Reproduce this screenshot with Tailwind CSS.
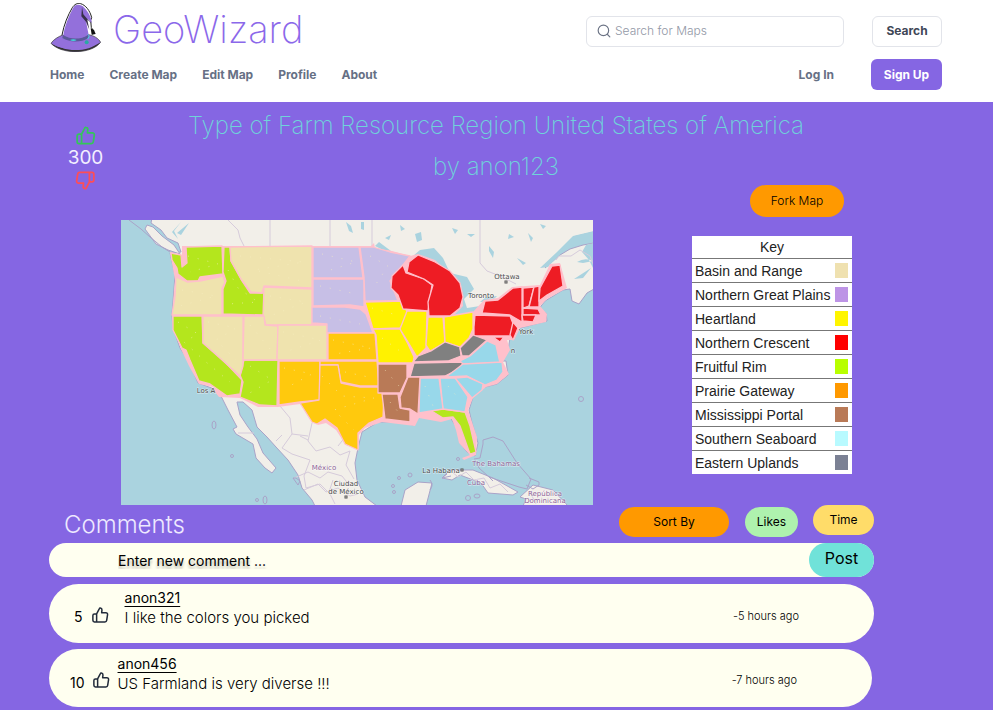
<!DOCTYPE html>
<html lang="en">
<head>
<meta charset="utf-8">
<meta name="viewport" content="width=device-width, initial-scale=1">
<title>GeoWizard</title>
<script src="https://cdn.jsdelivr.net/npm/@tailwindcss/browser@4"></script>
</head>
<body class="min-h-screen bg-[#8566e3] font-['Inter','Liberation_Sans',sans-serif] text-black">

<svg class="hidden" aria-hidden="true">
  <symbol id="thumb" viewBox="0 0 24 24">
    <path d="M7.500 10.500 11 3.800c.3-.9.9-1.300 1.700-1.100 1.400.3 2 1.300 1.900 2.700L14.200 9h5.600c1.600 0 2.500 1 2.300 2.500l-1.200 7.700c-.2 1.300-1.100 2-2.300 2H4.600c-1.300 0-2.100-.8-2.100-2.100v-6.500c0-1.300.8-2.100 2.100-2.100zM7.500 10.500v10.700" fill="none" stroke="currentColor" stroke-width="2" stroke-linejoin="round"/>
  </symbol>
</svg>

<header class="bg-white pt-[3px] pr-[51px] pb-3 pl-[50px]">
  <div class="flex h-14 items-center">
    <a href="#" class="flex items-center gap-3">
      <svg class="mb-2 h-[49px] w-[51px]" viewBox="150 8 153 147" aria-hidden="true">
        <path d="M186 104C192 72 204 44 217 22c7-11 15-14 25-12 14 4 28 20 33 42l-3 8 2 22 6 8-2 12" fill="none" stroke="#222" stroke-width="3"/>
        <path d="M153 129c8-12 22-20 35-25 26 14 56 13 76-1 18 2 32 12 38 23-16 19-44 28-76 28-30 0-58-9-73-25z" fill="#9370db" stroke="#333" stroke-width="2"/>
        <path d="M190 106c2-22 16-60 31-86 6-9 22-9 32 2 11 11 22 30 22 46l-12-12-5 6 8 42c-20 16-54 16-76 2z" fill="#9370db"/>
        <path d="M153 129c30 22 100 26 149-3-16 19-44 28-76 28-30 0-58-9-73-25z" fill="#333"/>
        <path d="M157 128c34 14 96 18 142-4-18 18-44 25-73 25-28 0-52-8-69-21z" fill="#9370db"/>
        <path d="M246 20l4 22 12 14 14 14-14-12 6 30-10-24-14-16z" fill="#37304a"/>
        <path d="M189 104c24 15 54 14 76-1l2 9c-26 16-58 14-80 1z" fill="#5b5a9a"/>
        <path d="M210 119c6-3 14-3 20 0-6 4-14 4-20 0z" fill="#46d4dd"/>
        <path d="M272 84l10 5 5 12-12 2z" fill="#111"/>
        <path d="M263 102l5 5-5 9" fill="none" stroke="#46d4dd" stroke-width="3"/>
        <circle cx="260" cy="126" r="6" fill="#2aa9a4"/>
      </svg>
      <span class="mb-1 text-[38px] leading-[48px] font-extralight text-[#8b68ea]">GeoWizard</span>
    </a>
    <form class="ml-auto flex items-center gap-7">
      <label class="flex h-[31px] w-[258px] items-center gap-1 rounded-md border border-[#e2e4ea] px-[10px]">
        <svg class="h-[14px] w-[14px] shrink-0 text-[#6b7385]" viewBox="0 0 24 24" fill="none" stroke="currentColor" stroke-width="2" stroke-linecap="round" aria-hidden="true"><circle cx="11" cy="11" r="9"/><path d="m18 18 4 4"/></svg>
        <input type="search" aria-label="Search for Maps" placeholder="Search for Maps" class="w-full min-w-0 text-[12px] font-light outline-none placeholder:text-[#9298a6]">
      </label>
      <button type="button" class="h-[31px] w-[70px] rounded-md border border-[#e2e4ea] text-[12px] font-bold text-[#3f4757]">Search</button>
    </form>
  </div>
  <nav class="flex h-[31px] items-center gap-[25px] text-[12px] font-bold text-[#667085]">
    <a href="#">Home</a>
    <a href="#">Create Map</a>
    <a href="#">Edit Map</a>
    <a href="#">Profile</a>
    <a href="#">About</a>
    <a href="#" class="ml-auto">Log In</a>
    <button type="button" class="ml-3 h-[31px] w-[71px] rounded-md bg-[#8566e3] text-[12px] font-bold text-white">Sign Up</button>
  </nav>
</header>

<main class="pr-[51px] pl-[50px]">
  <div class="grid grid-cols-[71px_1fr_99px_250px]">
    <section class="col-start-1 row-start-1 flex flex-col items-center pt-[23px]" aria-label="Map rating">
      <button type="button" aria-label="Like map" class="text-[#34c65a]"><svg class="h-[21px] w-[21px]"><use href="#thumb"/></svg></button>
      <span class="text-[19px] leading-6 text-[#f3efff]">300</span>
      <button type="button" aria-label="Dislike map" class="text-[#ff4d55]"><svg class="h-[21px] w-[21px] rotate-180"><use href="#thumb"/></svg></button>
    </section>
    <h1 class="pointer-events-none col-span-4 col-start-1 row-start-1 pt-[3px] text-center text-[24px] leading-[41px] font-extralight text-[#6fd3da]">Type of Farm Resource Region United States of America<br>by anon123</h1>
    <div class="col-start-4 row-start-1 flex h-[118px] w-40 items-end justify-end pr-2 pb-[3px]">
      <button type="button" class="h-8 w-[94px] rounded-full bg-[#ff9900] text-[12px] font-light">Fork Map</button>
    </div>

    <svg class="col-start-2 row-start-2 block w-full" viewBox="121 220 472 285" role="img" aria-label="Map of United States farm resource regions">
      <rect x="121" y="220" width="472" height="285" fill="#aad3df"/>
      <g fill="#f2efe9" stroke="#a9a3c8" stroke-width="1" stroke-linejoin="round">
        <path d="M152 218 151 223 161 230 167 238 178 243 181 252 170 253 175 275 172 315 173 328 180 348 188 360 198 383 217 390 222 398 228 410 237 427 233 429 236 434 253 444 256 458 265 468 272 473 276 468 263 453 257 439 248 427 240 415 237 402 243 402 252 410 257 427 267 437 276 447 288 460 298 475 302 488 312 500 315 506H377L365 497 357 480 355 463 358 448 362 432 378 422 398 422 413 425 418 417 435 416 441 421 450 417 458 430 460 443 467 452 475 456 478 443 472 423 469 410 473 397 485 387 497 384 508 375 506 361 502 361 508 351 510 338 520 328 547 321 546 313 538 310 545 301 563 290 570 289 572 301 579 304 587 293 594 289V243L583 245 570 249 560 255 545 268 558 254 573 237 594 232V218Z"/>
        <path d="M147 225 145 229 156 244 168 250 180 254 174 245 162 236 153 227Z"/>
        <path d="M442 478 450 470 473 470 493 478 518 492 513 495 488 493 481 483 460 475 452 480Z"/>
        <path d="M520 497 533 485 553 490 568 506H523L526 499Z"/>
        <path d="M401 506 405 490 418 482 432 483 426 506Z"/>
      </g>
      <g fill="#aad3df">
        <path d="M413 256 420 250 434 248 443 258 450 273 467 277 474 289 464 299 467 308 480 306 474 313 452 318 440 290Z"/>
        <path d="M480 302 486 297 497 296 492 301Z"/>
        <path d="M594 231 573 236 557 252 540 268 548 267 563 251 580 242 594 242Z"/>
        <path d="M586 245 582 252 589 260 594 270V243ZM577 262q8-5 16-1l-10 2zM574 279l17-11-8 10z"/>
        <path d="M346 222l5 4 2 7-4-2zM361 222l3 0 0 8-3-1zM415 234l6-2 1 8-5 2zM181 222l-7 9 4 8-6-7zM177 233l12-10-8 12zM385 238l6-3-2 5zM375 246l8 4 8 1-12-9zM400 225l5 4-4 2zM452 228l3 6 3-4zM467 234l4 3 4-3zM489 246l5 6-1 6-4-7zM528 233l5 5-2 4zM540 224l3 5 3-3zM509 234l5 3-6 2zM517 258l9 5-3 2z"/>
      </g>
      <g fill="none" stroke="#d6cbdb" stroke-width="1">
        <path d="M228 220l10 10 2 8 4 8M270 220v26M330 220v26M372 220v27M480 220V263l7 8 13 5 16 8M556 260l3-4 12 0 9-6 10 6 3 8"/>
        <path d="M276 441l6-6M280 406l10 12 2 16-10 14 10 6 18 6-6 16 2 12 14-4 10 10M312 423l-4 18 8 10 14-4 10 8 10-4-4 14 8 14M338 446l8-10-6-10M294 478l14-6 12 6 8-6 14 4 8 10M304 490l14-6 8 8 12-4 12 8 8-2M333 480l-4 12 6 12M450 470l8 7 8-5 8 8 10-2 6 10 10-4 8 8M238 433h16M530 492l6 12M300 436l8 4M292 434l16 2"/>
      </g>
      <g fill="none" stroke="#a9a3c8" stroke-width="1">
        <path d="M129 220l12 9 9 8 12 10 8 5"/>
        <path d="M474 459l6-1 3-14 0-4 10-3 10 4 14 22 14 16-4 10-8-2-30-10-10-9-4-8M529 478l10 4 0 3-6 4-7-4M493 481l-5-5M447 474l-5 4 9-2"/>
        <ellipse cx="214" cy="425" rx="2" ry="4"/><circle cx="232" cy="456" r="1.500"/><circle cx="257" cy="500" r="1.500"/><ellipse cx="265" cy="500" rx="2" ry="4"/><circle cx="581" cy="399" r="2.500"/><circle cx="410" cy="475" r="2"/><circle cx="399" cy="478" r="1.500"/><circle cx="393" cy="486" r="1.500"/><circle cx="394" cy="492" r="1.500"/><circle cx="468" cy="498" r="2.500"/><ellipse cx="477" cy="496" rx="3" ry="2"/><path d="M430 480q4 5 0 10M293 478l5 7 2-4-4-3z"/><circle cx="458" cy="459" r="1.500"/>
      </g>
      <path fill="#ffc0cb" d="M170 252 182 255 182 246H371L374 243 375 248 392 251 410 256 418 254 435 260 461 285 463 306 452 317 473 312 484 300 498 298 512 287 540 285 550 264 560 263 567 288 547 299 540 306 547 314 546 322 520 328 514 340 507 340 510 350 503 362 509 374 497 384 486 387 473 398 468 410 477 437 476 455 464 460 462 458 470 455 459 443 456 430 452 419 441 422 419 418 415 426 382 422 365 428 359 435 359 449 346 445 336 430 326 423 318 425 300 404 278 407 258 407 240 398 219 397 215 392 213 387 199 384 189 366 181 349 173 329 172 315 175 280Z"/>
      <g stroke="#ffc0cb" stroke-width="1.300" stroke-linejoin="round">
        <g fill="#b4e61d">
          <path d="M186 247 222 246 223 274 200 277 198 281 187 281 178 274 177 268 172 260 171 253 181 255 182 267 187 263Z"/>
          <path d="M224 247H230L231 261 242 281 250 293 264 293V315L223 314V289L226 281 223 272Z"/>
          <path d="M173 316H202L203 343 223 360 242 380 240 394 227 396 210 384 199 381 190 360 186 350 182 348 173 330Z"/>
          <path d="M244 360H278L277 406 260 405 240 397 243 382 240 375Z"/>
          <path d="M430 410 443 409 465 412 470 426 476 452 470 454 460 426 453 417 443 418Z"/>
        </g>
        <g fill="#efe3ae">
          <path d="M230 247 312 246V288L264 286 262 293 251 292 241 279 231 261Z"/>
          <path d="M264 287 312 289V325H266L263 315Z"/>
          <path d="M176 277 187 282 200 281 223 276 225 282 222 288V315H172L175 297Z"/>
          <path d="M203 316H243V366L240 376 203 343Z"/>
          <path d="M244 316H264L265 325 278 326 277 360H243Z"/>
          <path d="M278 325H327V360H277Z"/>
        </g>
        <g fill="#c7bfe6">
          <path d="M313 247H359L363 278H313Z"/>
          <path d="M313 279H364V307L350 305 313 306Z"/>
          <path d="M312 307 345 307 360 309 366 314 373 333H327V324L312 323Z"/>
          <path d="M360 247 373 247 390 252 410 256 403 265 390 281 398 301H365L364 277Z"/>
        </g>
        <g fill="#ffc90d">
          <path d="M279 361H320V400L300 402 279 405Z"/>
          <path d="M328 333 375 333 377 360H328Z"/>
          <path d="M320 361H377L379 386 360 386 341 382 338 365H320Z"/>
          <path d="M320 365H338L341 383 360 387 378 387 384 395 383 417 369 423 358 433 358 450 345 444 337 428 325 419 317 424 312 422 300 403 319 400Z"/>
        </g>
        <g fill="#fff200">
          <path d="M365 302 403 301 408 315 400 328 373 329Z"/>
          <path d="M373 329 400 329 408 344 414 357 413 363H378L376 335Z"/>
          <path d="M407 311H427L426 348 417 357 408 342 400 329Z"/>
          <path d="M428 317H443L445 343 430 351 426 345Z"/>
          <path d="M444 317 473 312V329L469 338 460 347 445 342Z"/>
        </g>
        <g fill="#ee1c24">
          <path d="M403 265 406 273 424 279 432 285 428 311 403 309 398 295 391 288 392 276Z"/>
          <path d="M418 255 435 262 450 271 460 283 463 297 460 308 450 316 429 316 428 302 433 285 424 279 407 272 409 262Z"/>
          <path d="M485 301 498 300 513 288 522 287 522 322 510 315 482 313Z"/>
          <path d="M475 315 510 316 514 326 511 336H474V327Z"/>
          <path d="M513 322 518 328 513 340 510 335Z"/>
          <path d="M523 288 534 287 529 306 523 308Z"/>
          <path d="M534 287 539 286V307H529Z"/>
          <path d="M523 308 538 309 541 315H523Z"/>
          <path d="M522 315H536L533 322 523 321Z"/>
          <path d="M552 266 560 265 563 286 547 295 539 301 540 288Z"/>
          <path d="M493 337H504L500 342Z"/>
        </g>
        <g fill="#808080">
          <path d="M413 362 418 356 431 351 445 342 460 347 461 356 448 361Z"/>
          <path d="M460 348 473 335 487 340 469 356 462 356Z"/>
          <path d="M414 363 463 362 461 368 445 376 410 377Z"/>
        </g>
        <g fill="#98d8ea">
          <path d="M460 361 470 356 487 341 496 345 500 363 463 364Z"/>
          <path d="M463 364 502 362 503 372 497 380 485 385 467 376 446 377Z"/>
          <path d="M455 378 467 377 483 384 482 390 472 398Z"/>
          <path d="M440 378 455 378 468 397 465 412 443 409Z"/>
          <path d="M420 378 439 378 443 409 419 413Z"/>
        </g>
        <g fill="#b97a57">
          <path d="M378 364 407 364 407 378 400 393H378Z"/>
          <path d="M382 394H398L400 408 410 410 410 422 385 419Z"/>
          <path d="M408 377H420L418 414 410 409 401 408 400 397Z"/>
        </g>
      </g>
      <g fill="none" stroke="#f6eec2" stroke-opacity=".6" stroke-width="1" stroke-dasharray="1 9">
        <path d="M188 256l30 8-28 8M228 270l10 18 20 14-30 2M240 256l64 6-50 8 52 12M270 296l36 6-36 14M182 290l34 6-36 10M208 322l28 6-20 12 20 20M250 325l20 24M283 332l38 8-36 12M178 322l20 12-14 8 22 20 24 20M250 366l22 14-24 14M284 368l28 6-26 14M333 340l38 8-36 6M322 376l20 20 32 2-40 12 20 20M345 372l28 6M372 308l28 8M382 338l22 16M322 254l34 8-32 10M320 286l36 8M320 316l40 8M370 256l18 10-16 24M425 386l8 20M448 386l12 14M385 370l14 16M390 402l10 12"/>
      </g>
      <g class="font-['DejaVu_Sans',sans-serif]" font-size="7" text-anchor="middle" fill="#4a4a4a" stroke="#fff" stroke-opacity=".6" stroke-width="1" paint-order="stroke">
        <text x="507" y="279">Ottawa</text>
        <text x="481" y="298">Toronto</text>
        <text x="526" y="334">York</text>
        <text x="513" y="353">n</text>
        <text x="206" y="393">Los A</text>
        <text x="346" y="486">Ciudad</text>
        <text x="346" y="494">de México</text>
        <text x="441" y="473">La Habana</text>
        <g fill="#8d6396">
          <text x="324" y="470">México</text>
          <text x="496" y="466">The Bahamas</text>
          <text x="476" y="485">Cuba</text>
          <text x="545" y="496">República</text>
          <text x="545" y="503">Dominicana</text>
        </g>
      </g>
      <g fill="#fff" stroke="#555"><rect x="505" y="281" width="2" height="2"/><rect x="345" y="496" width="2" height="2"/><rect x="461" y="469" width="2" height="2"/></g>
    </svg>

    <div class="col-start-4 row-start-2 pt-4">
      <table class="w-40 border-collapse bg-white font-['Liberation_Sans',Arial,sans-serif] text-[14px] leading-[22px] text-[#222]">
        <thead><tr class="border-b border-[#777]"><th colspan="2" class="h-[22px] p-0 font-normal">Key</th></tr></thead>
        <tbody>
          <tr class="border-b border-[#777]"><td class="h-6 pl-[3px] pt-px whitespace-nowrap">Basin and Range</td><td class="pr-1"><div class="ml-auto h-[15px] w-[13px] bg-[#efe1b0]"></div></td></tr>
          <tr class="border-b border-[#777]"><td class="h-6 pl-[3px] pt-px whitespace-nowrap">Northern Great Plains</td><td class="pr-1"><div class="ml-auto h-[15px] w-[13px] bg-[#bd94e6]"></div></td></tr>
          <tr class="border-b border-[#777]"><td class="h-6 pl-[3px] pt-px whitespace-nowrap">Heartland</td><td class="pr-1"><div class="ml-auto h-[15px] w-[13px] bg-[#fff500]"></div></td></tr>
          <tr class="border-b border-[#777]"><td class="h-6 pl-[3px] pt-px whitespace-nowrap">Northern Crescent</td><td class="pr-1"><div class="ml-auto h-[15px] w-[13px] bg-[#ff0000]"></div></td></tr>
          <tr class="border-b border-[#777]"><td class="h-6 pl-[3px] pt-px whitespace-nowrap">Fruitful Rim</td><td class="pr-1"><div class="ml-auto h-[15px] w-[13px] bg-[#b8ff00]"></div></td></tr>
          <tr class="border-b border-[#777]"><td class="h-6 pl-[3px] pt-px whitespace-nowrap">Prairie Gateway</td><td class="pr-1"><div class="ml-auto h-[15px] w-[13px] bg-[#ff9900]"></div></td></tr>
          <tr class="border-b border-[#777]"><td class="h-6 pl-[3px] pt-px whitespace-nowrap">Mississippi Portal</td><td class="pr-1"><div class="ml-auto h-[15px] w-[13px] bg-[#b97a57]"></div></td></tr>
          <tr class="border-b border-[#777]"><td class="h-6 pl-[3px] pt-px whitespace-nowrap">Southern Seaboard</td><td class="pr-1"><div class="ml-auto h-[15px] w-[13px] bg-[#b8faff]"></div></td></tr>
          <tr><td class="h-[23px] pl-[3px] pt-px whitespace-nowrap">Eastern Uplands</td><td class="pr-1"><div class="ml-auto h-[15px] w-[13px] bg-[#7b8194]"></div></td></tr>
        </tbody>
      </table>
    </div>
  </div>

  <section class="mr-[68px] -ml-px">
    <div class="flex h-[38px] items-start pl-[15px]">
      <h2 class="mr-auto text-[24px] leading-[40px] font-light text-[#eee9ff]">Comments</h2>
      <button type="button" class="mt-[2px] h-[30px] w-[110px] rounded-full bg-[#ff9900] text-[12px]">Sort By</button>
      <button type="button" class="mt-[2px] ml-4 h-[30px] w-[53px] rounded-full bg-[#aef2ae] text-[12px]">Likes</button>
      <button type="button" class="ml-[15px] h-[30px] w-[61px] rounded-full bg-[#ffdc69] text-[12px]">Time</button>
    </div>
    <form class="flex h-[34px] rounded-full bg-[#fffff0]">
      <input type="text" aria-label="New comment" placeholder="Enter new comment ..." class="min-w-0 flex-1 pl-[69px] text-[14px] outline-none placeholder:text-black [text-shadow:0_3px_3px_rgb(0_0_0/0.3)]">
      <button type="button" class="w-[65px] rounded-full bg-[#70e2d9] pb-1 text-[16px]">Post</button>
    </form>
    <article class="mt-[7px] flex h-[59px] items-center rounded-full bg-[#fffff0] pr-[75px] pl-[25px]">
      <span class="pt-[6px] text-[14px]">5</span>
      <button type="button" aria-label="Like comment" class="ml-2 text-[#222b3a]"><svg class="mt-[2px] h-[18px] w-[18px]"><use href="#thumb"/></svg></button>
      <div class="mb-4 ml-4">
        <a href="#" class="block w-fit text-[14px] leading-5 underline underline-offset-3">anon321</a>
        <p class="h-4 text-[15px] leading-5 font-light">I like the colors you picked</p>
      </div>
      <time class="ml-auto pt-[5px] text-[11px] font-light">-5 hours ago</time>
    </article>
    <article class="mt-[6px] mr-[2px] flex h-[58px] items-center rounded-full bg-[#fffff0] pr-[75px] pl-[21px]">
      <span class="pt-[9px] text-[14px]">10</span>
      <button type="button" aria-label="Like comment" class="ml-[7px] text-[#222b3a]"><svg class="mt-1 h-[18px] w-[18px]"><use href="#thumb"/></svg></button>
      <div class="mb-3 ml-2">
        <a href="#" class="block w-fit text-[14px] leading-5 underline underline-offset-3">anon456</a>
        <p class="h-4 text-[15px] leading-5 font-light">US Farmland is very diverse !!!</p>
      </div>
      <time class="ml-auto pt-[5px] text-[11px] font-light">-7 hours ago</time>
    </article>
  </section>
</main>
</body>
</html>
